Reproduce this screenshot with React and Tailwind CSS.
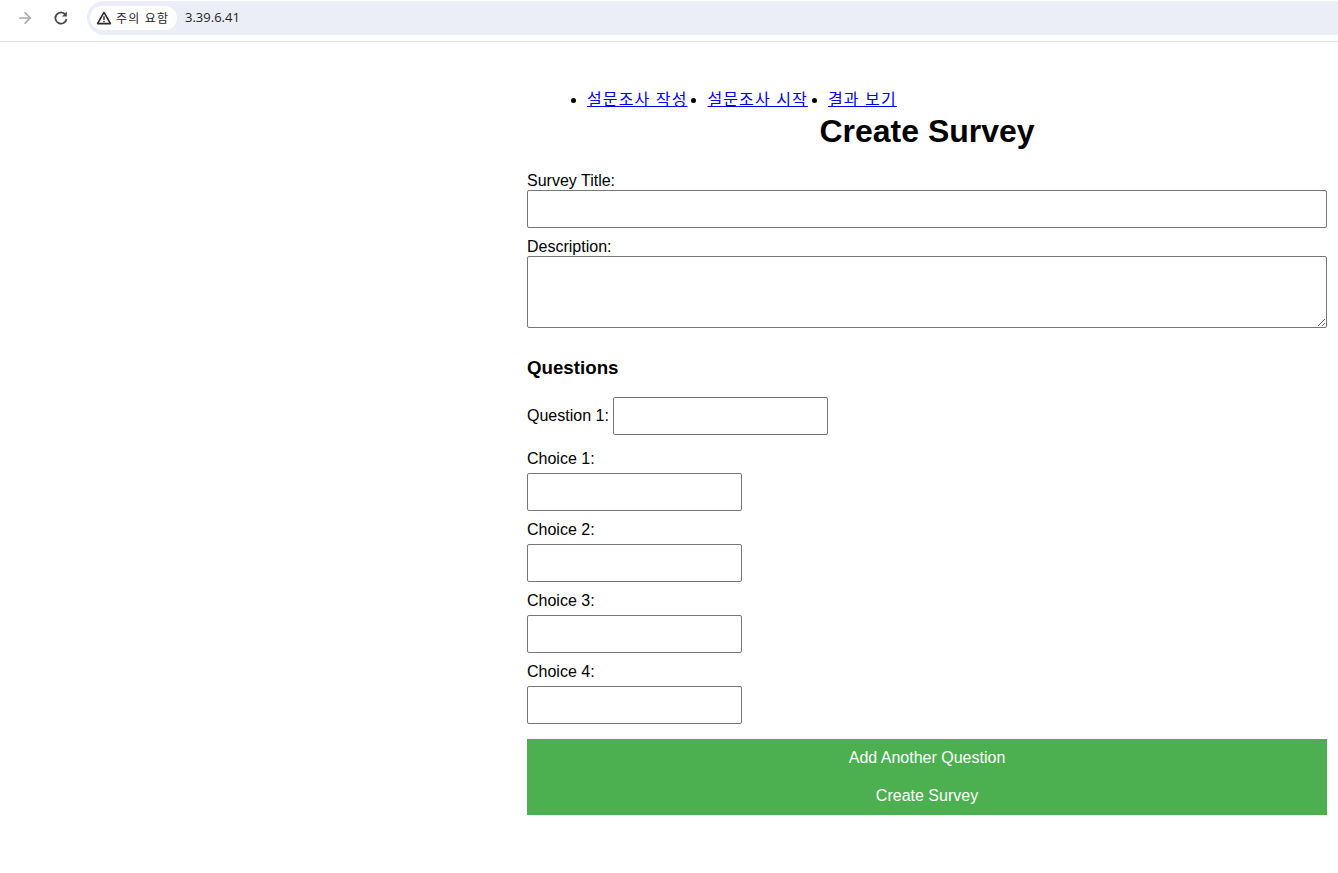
import React from 'react';
import { ArrowRight } from 'lucide-react';

const FONT = "font-['Liberation_Sans','Noto_Sans_CJK_KR',sans-serif]";
const CHOICES = ['Choice 1:', 'Choice 2:', 'Choice 3:', 'Choice 4:'];
const NAV = ['설문조사 작성', '설문조사 시작', '결과 보기'];

const inputClass = 'block h-[38px] border border-[#767676] rounded-[2px] bg-white';

function BrowserBar() {
  return (
    <div className="flex items-start h-[42px] border-b border-[#e0e0e0] bg-white">
      <div className="flex items-center h-9 pl-[16px]">
        <ArrowRight size={18} strokeWidth={2.2} className="text-[#a8a8a8]" />
        <svg width="16" height="16" viewBox="0 0 16 16" fill="none" className="ml-[19px]">
          <path d="M12.4 4.6A5.6 5.6 0 1 0 13.5 9" stroke="#474747" strokeWidth="1.8" />
          <path d="M13.8 1.6V6.4H9Z" fill="#474747" />
        </svg>
      </div>
      <div className="flex items-center flex-1 h-[34px] mt-[1px] ml-[18px] pl-[3px] rounded-l-[17px] bg-[#ebedf7]">
        <div className="flex items-center h-6 w-[87px] pl-[6px] gap-[5px] rounded-full bg-white">
          <svg width="15" height="14" viewBox="0 0 15 14" fill="none" className="translate-x-[0.5px]">
            <path d="M7.5 1.4 14 12.6H1Z" stroke="#2b2b2b" strokeWidth="1.6" strokeLinejoin="round" />
            <path d="M7.5 5.2V9M7.5 9.8V11.2" stroke="#2b2b2b" strokeWidth="1.4" />
          </svg>
          <span className="text-[12px] leading-none tracking-[1.3px] text-[#1f1f1f] font-['Noto_Sans_CJK_KR',sans-serif]">주의 요함</span>
        </div>
        <span className="ml-[8px] text-[13px] text-[#1f1f1f] font-['Open_Sans',sans-serif]">3.39.6.41</span>
      </div>
    </div>
  );
}

function App() {
  return (
    <div className={`min-h-[873px] bg-white text-black text-[16px] ${FONT}`}>
      <BrowserBar />
      <div className="flex justify-end pr-[11px]">
        <div className="w-[800px]">
          <ul className="flex pl-10 mt-[49px] list-disc leading-[18px]">
            {NAV.map((label) => (
              <li key={label} className="list-item ml-5">
                <a href="#" className="text-[#0000ee] underline tracking-[1.1px]">{label}</a>
              </li>
            ))}
          </ul>
          <h1 className="mt-[4px] text-[32px] leading-[37px] font-bold text-center">Create Survey</h1>

          <form className="mt-[21px]">
            <label className="block leading-[19px]">Survey Title:</label>
            <input type="text" className={`${inputClass} w-full`} />
            <label className="block mt-[9px] leading-[19px]">Description:</label>
            <textarea className="block w-full h-[72px] border border-[#767676] rounded-[2px] bg-white" />

            <h3 className="mt-[29px] text-[18.72px] leading-[22px] font-bold">Questions</h3>

            <div className="flex items-center gap-[4px] mt-[18px]">
              <label>Question 1:</label>
              <input type="text" className={`${inputClass} w-[215px]`} />
            </div>

            <div className="mt-[14px] flex flex-col gap-[9px]">
              {CHOICES.map((choice) => (
                <div key={choice}>
                  <label className="block leading-[19px] mb-[5px]">{choice}</label>
                  <input type="text" className={`${inputClass} w-[215px]`} />
                </div>
              ))}
            </div>

            <button type="button" className="block w-full h-[38px] mt-[15px] bg-[#4caf50] text-white text-center">Add Another Question</button>
            <button type="submit" className="block w-full h-[38px] bg-[#4caf50] text-white text-center">Create Survey</button>
          </form>
        </div>
      </div>
    </div>
  );
}

export default App;
